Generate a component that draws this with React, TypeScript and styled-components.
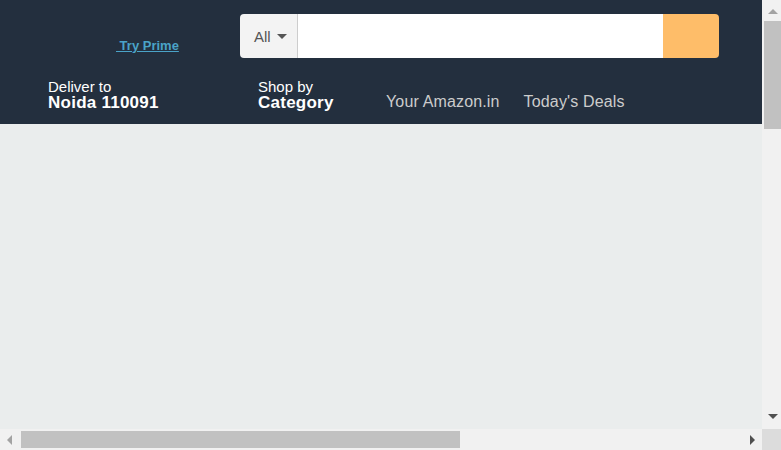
import React from "react";
import styled, { createGlobalStyle } from "styled-components";

const GlobalStyle = createGlobalStyle`
  html, body {
    margin: 0;
    padding: 0;
    background: #eaeded;
    font-family: "Liberation Sans", Arial, sans-serif;
  }
  * { box-sizing: border-box; }
`;

const Page = styled.div`
  min-width: 1270px;
  background: #eaeded;
`;

const Header = styled.header`
  background: #232f3e;
  display: flex;
  flex-direction: column;
`;

const TopRow = styled.div`
  height: 72px;
  display: flex;
  align-items: center;
`;

const LogoArea = styled.div`
  width: 240px;
  flex: none;
  padding-left: 116px;
  margin-top: 17px;
`;

const PrimeLink = styled.a`
  color: #4aa3c8;
  font-size: 13px;
  font-weight: bold;
  text-decoration: underline;
  cursor: pointer;
  line-height: 15px;
`;

const SearchBar = styled.form`
  width: 479px;
  height: 44px;
  display: flex;
  border-radius: 4px;
  overflow: hidden;
  flex: none;
`;

const CategorySelect = styled.div`
  width: 58px;
  flex: none;
  background: #f3f3f3;
  border-right: 1px solid #cdcdcd;
  display: flex;
  align-items: center;
  padding-left: 14px;
  gap: 6px;
  color: #555;
  font-size: 15px;
`;

const Caret = styled.span`
  width: 0;
  height: 0;
  border-left: 5px solid transparent;
  border-right: 5px solid transparent;
  border-top: 5px solid #555;
  margin-top: 1px;
`;

const SearchInput = styled.input`
  flex: 1;
  border: none;
  outline: none;
  background: #fff;
  font-size: 15px;
  padding: 0 10px;
  min-width: 0;
`;

const SearchButton = styled.button`
  width: 56px;
  flex: none;
  border: none;
  background: #febd69;
  cursor: pointer;
`;

const BottomRow = styled.div`
  display: flex;
  align-items: flex-end;
  padding: 6px 0 13px 48px;
`;

const InfoBlock = styled.div<{ $width: number }>`
  width: ${(p) => p.$width}px;
  flex: none;
  display: flex;
  flex-direction: column;
  color: #fff;
`;

const SmallLine = styled.span`
  font-size: 15px;
  line-height: 17px;
`;

const BigLine = styled.span`
  font-size: 17px;
  font-weight: bold;
  line-height: 16px;
  letter-spacing: 0.25px;
`;

const NavLink = styled.a`
  color: #ccc;
  font-size: 16px;
  letter-spacing: 0.15px;
  margin-right: 24px;
  cursor: pointer;
`;

const Main = styled.main`
  height: 1476px;
  background: #eaeded;
`;

/* Window scrollbars drawn over the page, as in the reference */
const VScroll = styled.div`
  position: fixed;
  top: 0;
  right: 0;
  bottom: 21px;
  width: 19px;
  background: #f1f1f1;
  display: flex;
  flex-direction: column;
`;

const HScroll = styled.div`
  position: fixed;
  left: 0;
  right: 19px;
  bottom: 0;
  height: 21px;
  background: #f1f1f1;
  display: flex;
`;

const Corner = styled.div`
  position: fixed;
  right: 0;
  bottom: 0;
  width: 19px;
  height: 21px;
  background: #dcdcdc;
`;

const ScrollButton = styled.div<{ $dir: "up" | "down" | "left" | "right"; $active?: boolean }>`
  flex: none;
  width: 21px;
  height: 21px;
  display: flex;
  align-items: center;
  justify-content: center;
  ${(p) => (p.$dir === "up" || p.$dir === "down" ? "width: 100%; padding-left: 2px;" : "")}
  &::before {
    content: "";
    width: 0;
    height: 0;
    ${(p) => {
      const c = p.$active ? "#505050" : "#a3a3a3";
      switch (p.$dir) {
        case "up":
          return `border-left: 5px solid transparent; border-right: 5px solid transparent; border-bottom: 5px solid ${c}; margin-top: 2px;`;
        case "down":
          return `border-left: 5px solid transparent; border-right: 5px solid transparent; border-top: 5px solid ${c}; margin-top: -4px;`;
        case "left":
          return `border-top: 5px solid transparent; border-bottom: 5px solid transparent; border-right: 5px solid ${c}; margin-left: -2px;`;
        default:
          return `border-top: 5px solid transparent; border-bottom: 5px solid transparent; border-left: 5px solid ${c}; margin-left: 2px;`;
      }
    }}
  }
`;

const VThumb = styled.div`
  flex: none;
  height: 108px;
  margin-left: 2px;
  background: #c1c1c1;
`;

const HThumb = styled.div`
  flex: none;
  width: 439px;
  margin: 2px 0;
  background: #c1c1c1;
`;

const Track = styled.div`
  flex: 1;
`;

export default function App() {
  return (
    <Page>
      <GlobalStyle />
      <Header>
        <TopRow>
          <LogoArea>
            <PrimeLink>{"\u00a0Try Prime"}</PrimeLink>
          </LogoArea>
          <SearchBar onSubmit={(e) => e.preventDefault()}>
            <CategorySelect>
              All
              <Caret />
            </CategorySelect>
            <SearchInput type="text" />
            <SearchButton type="submit" aria-label="Search" />
          </SearchBar>
        </TopRow>
        <BottomRow>
          <InfoBlock $width={210}>
            <SmallLine>Deliver to</SmallLine>
            <BigLine>Noida 110091</BigLine>
          </InfoBlock>
          <InfoBlock $width={128}>
            <SmallLine>Shop by</SmallLine>
            <BigLine>Category</BigLine>
          </InfoBlock>
          <NavLink>Your Amazon.in</NavLink>
          <NavLink>Today's Deals</NavLink>
        </BottomRow>
      </Header>
      <Main />
      <VScroll aria-hidden>
        <ScrollButton $dir="up" />
        <VThumb />
        <Track />
        <ScrollButton $dir="down" $active />
      </VScroll>
      <HScroll aria-hidden>
        <ScrollButton $dir="left" />
        <HThumb />
        <Track />
        <ScrollButton $dir="right" $active />
      </HScroll>
      <Corner aria-hidden />
    </Page>
  );
}
